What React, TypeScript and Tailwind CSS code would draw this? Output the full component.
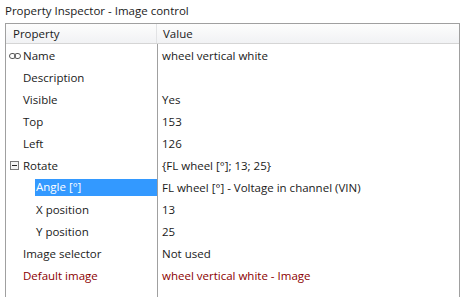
import React from "react";

type Row = {
  label: string;
  value: string;
  indent: 0 | 1;
  icon?: "link" | "minus";
  selected?: boolean;
  red?: boolean;
};

const rows: Row[] = [
  { label: "Name", value: "wheel vertical white", indent: 0, icon: "link" },
  { label: "Description", value: "", indent: 0 },
  { label: "Visible", value: "Yes", indent: 0 },
  { label: "Top", value: "153", indent: 0 },
  { label: "Left", value: "126", indent: 0 },
  { label: "Rotate", value: "{FL wheel [°]; 13; 25}", indent: 0, icon: "minus" },
  { label: "Angle [°]", value: "FL wheel [°] - Voltage in channel (VIN)", indent: 1, selected: true },
  { label: "X position", value: "13", indent: 1 },
  { label: "Y position", value: "25", indent: 1 },
  { label: "Image selector", value: "Not used", indent: 0 },
  { label: "Default image", value: "wheel vertical white - Image", indent: 0, red: true },
];

function LinkIcon() {
  return (
    <svg width="12" height="6" viewBox="0 0 12 6" className="shrink-0">
      <rect x="0.5" y="0.5" width="6" height="5" rx="2.5" fill="none" stroke="#555" strokeWidth="1" />
      <rect x="5.5" y="0.5" width="6" height="5" rx="2.5" fill="none" stroke="#555" strokeWidth="1" />
    </svg>
  );
}

function MinusIcon() {
  return (
    <svg width="9" height="9" viewBox="0 0 9 9" className="shrink-0">
      <rect x="0.5" y="0.5" width="8" height="8" fill="#f4f4f4" stroke="#7a7a7a" />
      <line x1="2" y1="4.5" x2="7" y2="4.5" stroke="#222" strokeWidth="1" />
    </svg>
  );
}

export default function App() {
  return (
    <div
      className="w-[460px] h-[297px] bg-white overflow-hidden text-[11.5px] text-[#1a1a1a]"
      style={{ fontFamily: '"Open Sans", "Noto Sans", Arial, sans-serif' }}
    >
      <div className="h-[23px] pl-[5px] pt-[2px] leading-[18px]">Property Inspector - Image control</div>
      <div className="ml-[5px] w-[455px] border-l border-t border-r border-[#a0a0a0] h-[280px] flex flex-col">
        <div className="flex h-[20px] shrink-0 border-b border-[#d5d5d5] bg-gradient-to-b from-[#fdfdfd] to-[#f1f2f4] leading-[19px]">
          <div className="w-[151px] pl-[7px] border-r border-[#e2e3e5]">Property</div>
          <div className="pl-[6px]">Value</div>
        </div>
        {rows.map((r, i) => (
          <div key={i} className="flex h-[22px] shrink-0 items-center leading-[16px]">
            <div className="w-[152px] h-full border-r border-[#a0a0a0] flex items-center pt-[1px]">
              {r.indent === 0 ? (
                <div className="w-[16px] pl-[3px] flex items-center">
                  {r.icon === "link" && <LinkIcon />}
                  {r.icon === "minus" && (
                    <span className="pl-[1px] flex">
                      <MinusIcon />
                    </span>
                  )}
                </div>
              ) : (
                <div className="w-[29px]" />
              )}
              <span
                className={
                  r.selected
                    ? "bg-[#3399ff] text-white h-[17px] flex-1 pl-[1px]"
                    : r.red
                    ? "text-[#8b0000] pl-[1px]"
                    : "pl-[1px]"
                }
              >
                {r.label}
              </span>
            </div>
            <div className={"pl-[4px] pt-[1px] " + (r.red ? "text-[#8b0000]" : "")}>{r.value}</div>
          </div>
        ))}
        <div className="flex-1 flex">
          <div className="w-[152px] border-r border-[#a0a0a0]" />
        </div>
      </div>
    </div>
  );
}
